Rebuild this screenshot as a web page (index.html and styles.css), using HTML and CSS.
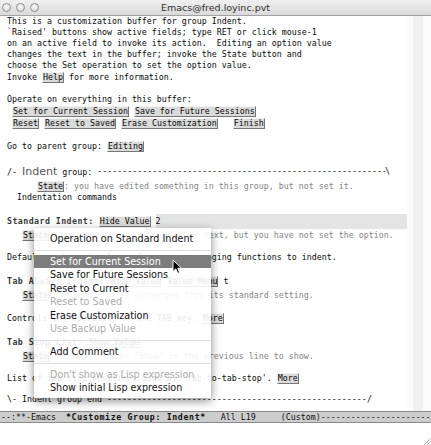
FILE: index.html
```html
<!DOCTYPE html>
<html>
<head>
<meta charset="utf-8">
<link rel="stylesheet" href="styles.css">
</head>
<body>
<div class="window">
  <div class="titlebar">
    <div class="lights"><span class="light"></span><span class="light"></span><span class="light"></span></div>
    <div class="title">Emacs@fred.loyinc.pvt</div>
    <div></div>
  </div>
  <div class="main">
    <div class="buffer">
      <div class="line">This is a customization buffer for group Indent.</div>
      <div class="line">`Raised' buttons show active fields; type RET or click mouse-1</div>
      <div class="line">on an active field to invoke its action.  Editing an option value</div>
      <div class="line">changes the text in the buffer; invoke the State button and</div>
      <div class="line">choose the Set operation to set the option value.</div>
      <div class="line b">Invoke <span class="btn">Help</span> for more information.</div>
      <div class="line"></div>
      <div class="line">Operate on everything in this buffer:</div>
      <div class="line b"> <span class="btn">Set for Current Session</span> <span class="btn">Save for Future Sessions</span></div>
      <div class="line b"> <span class="btn">Reset</span> <span class="btn">Reset to Saved</span> <span class="btn">Erase Customization</span>   <span class="btn">Finish</span></div>
      <div class="line"></div>
      <div class="line b">Go to parent group: <span class="btn">Editing</span></div>
      <div class="line"></div>
      <div class="line hdr"><span>/- <span class="gtag">Indent</span> group: </span><span class="dashes">--------------------------------------------------------------------------------------------------------</span><span>\</span></div>
      <div class="line b">      <span class="btn">State</span><span class="doc">: you have edited something in this group, but not set it.</span></div>
      <div class="line">  Indentation commands</div>
      <div class="line"></div>
      <div class="line tag row"><span><span class="vtag">Standard Indent:</span> <span class="btn">Hide Value</span> </span><span class="field">2</span></div>
      <div class="line b">   <span class="btn">State</span><span class="doc">: you have edited the value as text, but you have not set the option.</span></div>
      <div class="line"></div>
      <div class="line">Default number of columns for margin-changing functions to indent.</div>
      <div class="line"></div>
      <div class="line tag"><span class="vtag">Tab Always Indent:</span> <span class="btn">Hide Value</span> <span class="btn">Value Menu</span> t</div>
      <div class="line b">   <span class="btn">State</span><span class="doc">: this option is unchanged from its standard setting.</span></div>
      <div class="line"></div>
      <div class="line b">Controls the operation of the TAB key. <span class="btn">More</span></div>
      <div class="line"></div>
      <div class="line tag"><span class="vtag">Tab Stop List:</span> <span class="btn">Show Value</span></div>
      <div class="line b">   <span class="btn">State</span><span class="doc">: hidden, invoke "Show" in the previous line to show.</span></div>
      <div class="line short"></div>
      <div class="line b">List of tab stop positions used by `tab-to-tab-stop'. <span class="btn">More</span></div>
      <div class="line short"></div>
      <div class="line end"><span>\- Indent group end </span><span class="dashes">--------------------------------------------------------------------------------------------------------</span><span>/</span></div>
      <div class="line"></div>
    </div>
    <div class="scroll"><div class="s1"></div><div class="s2"></div><div class="s3"></div></div>
  </div>
  <div class="modeline"><span>--:**-Emacs  <b>*Customize Group: Indent*</b>   All L19     (Custom)</span><span class="dashes">--------------------------------------------------------------------------------------</span></div>
  <div class="mini">
    <svg class="grip" width="9" height="9" viewBox="0 0 9 9"><path d="M8.5 1.5 L1.5 8.5 M8.5 4.5 L4.5 8.5 M8.5 7 L7 8.5" stroke="#9a9a9a" stroke-width="0.8" fill="none"/></svg>
  </div>

  <div class="menu">
    <div class="item">Operation on Standard Indent</div>
    <div class="sep"></div>
    <div class="item hl">Set for Current Session</div>
    <div class="item">Save for Future Sessions</div>
    <div class="item">Reset to Current</div>
    <div class="item dis">Reset to Saved</div>
    <div class="item">Erase Customization</div>
    <div class="item dis">Use Backup Value</div>
    <div class="sep"></div>
    <div class="item">Add Comment</div>
    <div class="sep"></div>
    <div class="item dis">Don't show as Lisp expression</div>
    <div class="item">Show initial Lisp expression</div>
  </div>
  <svg class="cursor" width="12" height="16" viewBox="0 0 12 16"><path d="M1 1 L1 12.5 L3.8 9.8 L5.8 14.3 L7.6 13.5 L5.7 9.2 L9.4 9.2 Z" fill="#000" stroke="#fff" stroke-width="0.9" stroke-linejoin="round"/></svg>
</div>
</body>
</html>
```

FILE: styles.css
```css
html, body {
  margin: 0;
  padding: 0;
  background: #ffffff;
}
body {
  width: 431px;
  height: 445px;
  overflow: hidden;
}
.window {
  position: relative;
  width: 431px;
  height: 445px;
  background: #ffffff;
  font-family: "DejaVu Sans Mono", "Liberation Mono", monospace;
}
.titlebar {
  height: 15px;
  border-bottom: 1px solid #a2a2a2;
  background: linear-gradient(#f0f0f0, #dadada);
  display: grid;
  grid-template-columns: 1fr auto 1fr;
  align-items: center;
}
.lights {
  display: flex;
  gap: 5px;
  padding-left: 2px;
}
.light {
  width: 9px;
  height: 9px;
  border-radius: 50%;
  border: 1px solid #8e8e8e;
  box-sizing: border-box;
  background: radial-gradient(circle at 50% 35%, #fafafa, #d4d4d4);
}
.title {
  font-family: "DejaVu Sans", sans-serif;
  font-size: 9.5px;
  color: #303030;
  white-space: nowrap;
}
.main {
  display: flex;
  height: 395px;
}
.buffer {
  width: 407px;
  padding-left: 7px;
  box-sizing: border-box;
  font-size: 8.3px;
  color: #0a0a0a;
  overflow: hidden;
}
.line {
  height: 11px;
  line-height: 11px;
  white-space: pre;
}
.line.short { height: 10px; }
.line.b { height: 12px; line-height: 12px; }
.line.tag { height: 15px; line-height: 15px; }
.line.hdr { height: 17px; line-height: 17px; }
.row { display: flex; }
.hdr, .end {
  display: flex;
}
.hdr { width: 383px; }
.end { width: 365px; }
.dashes {
  flex: 1;
  overflow: hidden;
}
.btn {
  display: inline-block;
  line-height: 9px;
  background: #dadada;
  border: 1px solid;
  border-color: #f2f2f2 #767676 #767676 #f2f2f2;
}
.doc { color: #858585; }
.vtag {
  font-weight: bold;
  letter-spacing: 0.42px;
  color: #3a3a3a;
}
.gtag {
  font-family: "DejaVu Sans", sans-serif;
  font-size: 11px;
  color: #555555;
}
.field {
  flex: 1;
  background: #e4e4e4;
}
.scroll {
  flex: 1;
  display: flex;
}
.s1 { width: 6px; background: #fbfbfb; }
.s2 { width: 10px; background: #f0f0f0; }
.s3 { flex: 1; background: #fbfbfb; }
.modeline {
  height: 10px;
  line-height: 10px;
  background: #cdcdcd;
  border-top: 1px solid #8a8a8a;
  border-bottom: 1px solid #8a8a8a;
  font-size: 8.3px;
  color: #111111;
  white-space: pre;
  display: flex;
  padding-left: 1px;
}
.modeline b { letter-spacing: 0.6px; }
.modeline .dashes { flex: 1; overflow: hidden; }
.mini {
  height: 23px;
  display: flex;
  justify-content: flex-end;
  align-items: flex-end;
}
.grip { display: block; }
.menu {
  position: absolute;
  left: 34px;
  top: 228px;
  width: 177px;
  padding: 4px 0 3px 0;
  background: rgba(255, 255, 255, 0.9);
  box-shadow: 0 3px 9px rgba(0, 0, 0, 0.45);
  font-family: "DejaVu Sans", sans-serif;
  font-size: 9.6px;
  color: #111111;
}
.item {
  height: 13.4px;
  line-height: 13.4px;
  padding-left: 16px;
  white-space: nowrap;
}
.item.hl { background: #7d7d7d; color: #ffffff; }
.item.dis { color: #ababab; }
.sep {
  height: 9.6px;
  display: flex;
  align-items: center;
}
.sep::after {
  content: "";
  flex: 1;
  height: 1px;
  background: #dcdcdc;
}
.cursor {
  position: absolute;
  left: 172px;
  top: 259px;
}
```
